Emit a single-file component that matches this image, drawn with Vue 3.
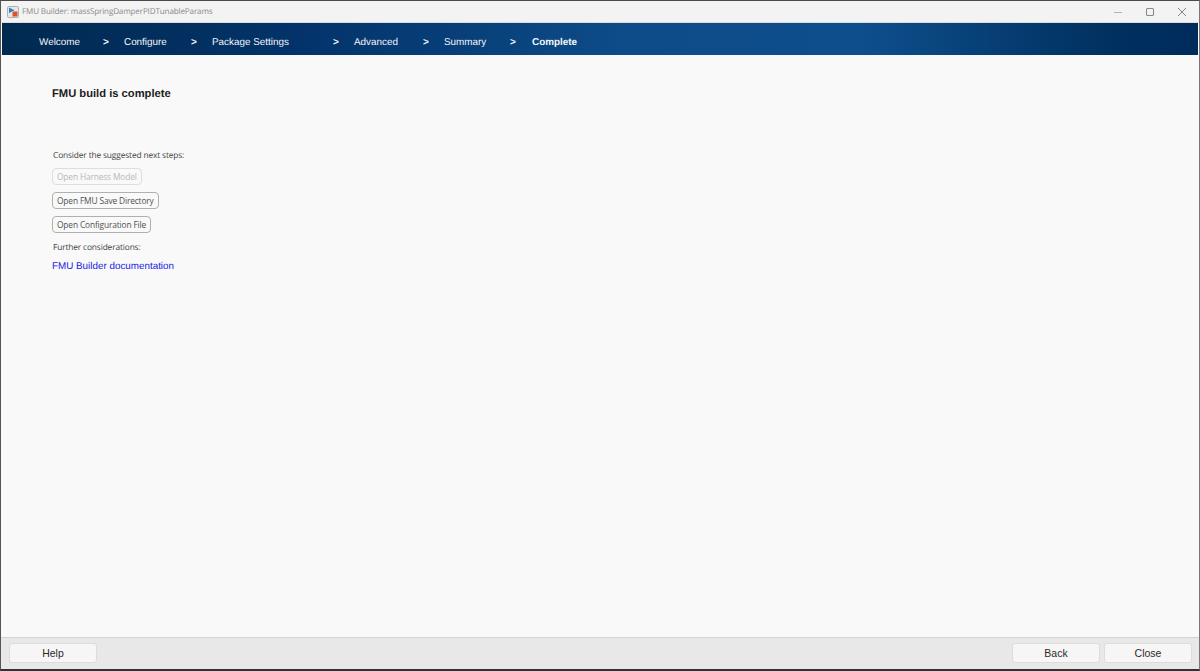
<script setup>
const steps = ['Welcome', 'Configure', 'Package Settings', 'Advanced', 'Summary']
const actions = [
  { label: 'Open Harness Model', disabled: true },
  { label: 'Open FMU Save Directory', disabled: false },
  { label: 'Open Configuration File', disabled: false }
]
</script>

<template>
  <div class="window">
    <div class="titlebar">
      <svg class="app-icon" width="12" height="12" viewBox="0 0 12 12">
        <rect x="0.5" y="0.5" width="11" height="11" rx="1" fill="#e6e6e6" stroke="#b0b0b0" />
        <path d="M2 1.5 L7.5 4.3 L2 7 Z" fill="#2f7fc0" />
        <rect x="5.5" y="5.5" width="5" height="5" fill="#d9542b" />
      </svg>
      <span class="title">FMU Builder: massSpringDamperPIDTunableParams</span>
      <div class="controls">
        <svg width="10" height="10" viewBox="0 0 10 10"><path d="M1 5.5H9" stroke="#b5b5b5" stroke-width="1" /></svg>
        <svg width="10" height="10" viewBox="0 0 10 10"><rect x="1.5" y="1.5" width="7" height="7" rx="1" fill="none" stroke="#8a8a8a" stroke-width="1.1" /></svg>
        <svg width="10" height="10" viewBox="0 0 10 10"><path d="M1 1L9 9M9 1L1 9" stroke="#777" stroke-width="0.9" /></svg>
      </div>
    </div>

    <nav class="steps">
      <template v-for="s in steps" :key="s">
        <span>{{ s }}</span>
        <span class="sep">&gt;</span>
      </template>
      <span class="current">Complete</span>
    </nav>

    <main class="content">
      <h1>FMU build is complete</h1>
      <p class="note first">Consider the suggested next steps:</p>
      <div class="actions">
        <button v-for="a in actions" :key="a.label" class="action" :disabled="a.disabled">{{ a.label }}</button>
      </div>
      <p class="note second">Further considerations:</p>
      <a class="doc" href="#">FMU Builder documentation</a>
    </main>

    <footer class="footer">
      <button class="foot-btn">Help</button>
      <div class="right">
        <button class="foot-btn">Back</button>
        <button class="foot-btn">Close</button>
      </div>
    </footer>
  </div>
</template>

<style>
html, body { margin: 0; padding: 0; background: #f9f9f9; }
</style>

<style scoped>
.window {
  width: 1200px;
  height: 671px;
  box-sizing: border-box;
  display: flex;
  flex-direction: column;
  background: #f9f9f9;
  border-top: 1px solid #4a4a4a;
  border-left: 1px solid #555;
  border-right: 1px solid #777;
  border-bottom: 2px solid #333;
  font-family: "Liberation Sans", Arial, sans-serif;
  text-rendering: geometricPrecision;
  overflow: hidden;
}
.titlebar {
  height: 21px;
  flex: none;
  display: flex;
  align-items: center;
  background: #f3f3f3;
  border-bottom: 1px solid #dcdcdc;
  padding-left: 6px;
}
.app-icon { margin-right: 3px; }
.title {
  font-family: "Open Sans", sans-serif;
  font-size: 8.1px;
  letter-spacing: -0.15px;
  color: #8a8a8a;
}
.controls {
  margin-left: auto;
  display: flex;
  gap: 22px;
  padding-right: 12px;
  align-items: center;
}
.controls svg { display: block; }
.steps {
  height: 32px;
  flex: none;
  margin: 0 1px;
  box-sizing: border-box;
  padding: 7px 0 0 37px;
  display: grid;
  grid-template-columns: 64px 21px 67px 21px 121px 21px 69px 21px 66px 22px auto;
  align-items: center;
  justify-content: start;
  color: #f4f6fa;
  font-size: 9.9px;
  background: linear-gradient(90deg, #012a50 0%, #03336a 25%, #0d4c88 52%, #0e4e8c 72%, #00305f 93%, #002c5c 100%);
}
.sep { font-weight: 700; font-size: 10px; }
.current { font-weight: 700; }
.content {
  flex: 1;
  padding-left: 51px;
  display: flex;
  flex-direction: column;
  align-items: flex-start;
}
h1 {
  margin: 33px 0 0;
  font-size: 11.2px;
  line-height: 13px;
  font-weight: 700;
  color: #1c1c1c;
}
.note {
  margin: 0 0 0 1px;
  font-family: "Open Sans", sans-serif;
  font-size: 8.4px;
  letter-spacing: -0.15px;
  line-height: 12px;
  color: #444;
}
.first { margin-top: 49px; }
.second { margin-top: 9px; }
.actions {
  margin-top: 6px;
  display: flex;
  flex-direction: column;
  align-items: flex-start;
  gap: 7px;
}
.action {
  height: 17px;
  padding: 0 4px;
  box-sizing: border-box;
  background: #f9f9f9;
  border: 1px solid #b0b0b0;
  border-radius: 4px;
  font-family: "Open Sans", sans-serif;
  font-size: 8.4px;
  letter-spacing: -0.15px;
  line-height: 15px;
  color: #505050;
}
.action:disabled {
  border-color: #dedede;
  color: #b8b8b8;
}
.doc {
  margin-top: 7px;
  font-size: 9.85px;
  line-height: 12px;
  color: #1a1ae6;
  text-decoration: none;
}
.footer {
  height: 32px;
  flex: none;
  box-sizing: border-box;
  display: flex;
  align-items: flex-start;
  justify-content: space-between;
  padding: 5px 7px 0 8px;
  background: #e8e8e8;
  border-top: 1px solid #d4d4d4;
}
.right { display: flex; gap: 4px; }
.foot-btn {
  width: 88px;
  height: 20px;
  box-sizing: border-box;
  padding: 0;
  background: #f6f6f6;
  border: 1px solid #dcdcdc;
  border-radius: 3px;
  font-family: "Liberation Sans", Arial, sans-serif;
  font-size: 10.5px;
  color: #2a2a2a;
}
</style>
